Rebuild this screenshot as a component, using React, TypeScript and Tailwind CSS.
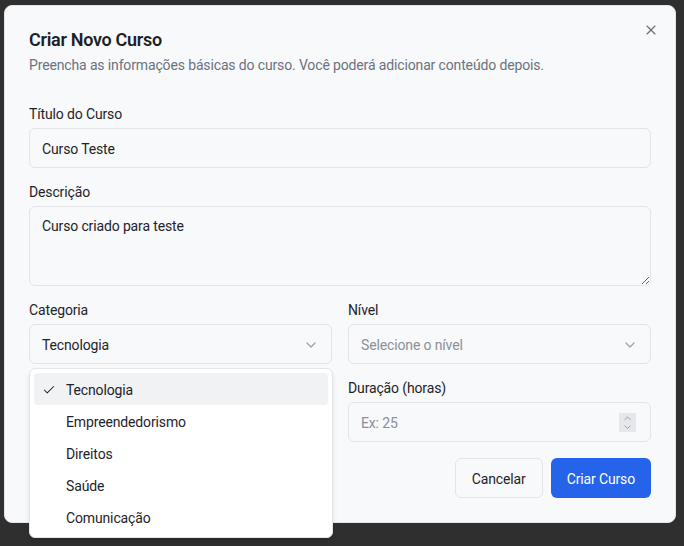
import { Check, ChevronDown, ChevronUp, X } from "lucide-react";

const categorias = ["Tecnologia", "Empreendedorismo", "Direitos", "Saúde", "Comunicação"];

const App = () => {
  const selected = "Tecnologia";

  return (
    <div className="h-[546px] w-full bg-[#2f2f2f] pl-[4px] pt-[5px] font-['Roboto',sans-serif] tracking-[-0.14px] text-[#1f2329]">
      {/* Dialog */}
      <div className="relative w-[672px] rounded-lg border border-[#e4e6ea] bg-[#f8f9fa] p-6">
        <button className="absolute right-4 top-4 text-[#6b7078]">
          <X className="h-4 w-4" strokeWidth={1.75} />
        </button>

        {/* Header */}
        <div className="flex flex-col gap-1.5 pt-px">
          <h2 className="text-lg font-semibold leading-none tracking-[-0.3px] text-[#1c1f26]">
            Criar Novo Curso
          </h2>
          <p className="text-sm leading-5 text-[#6b7280]">
            Preencha as informações básicas do curso. Você poderá adicionar conteúdo depois.
          </p>
        </div>

        {/* Form */}
        <form className="mt-4 flex flex-col gap-4 pt-[15px]">
          <div className="flex flex-col gap-[7px]">
            <label className="pt-px text-sm leading-none">Título do Curso</label>
            <div className="flex h-10 items-center rounded-md border border-[#e3e5e9] px-3 pt-px text-sm">
              Curso Teste
            </div>
          </div>

          <div className="flex flex-col gap-[7px]">
            <label className="pt-px text-sm leading-none">Descrição</label>
            <textarea
              defaultValue="Curso criado para teste"
              className="h-20 w-full rounded-md border border-[#e3e5e9] bg-transparent px-3 pb-[7px] pt-[9px] text-sm outline-none"
            />
          </div>

          <div className="grid grid-cols-2 gap-4">
            {/* Categoria with open menu */}
            <div className="relative flex flex-col gap-[7px]">
              <label className="pt-px text-sm leading-none">Categoria</label>
              <div className="flex h-10 items-center justify-between rounded-md border border-[#e3e5e9] px-3 pt-px text-sm">
                <span>Tecnologia</span>
                <ChevronDown className="h-4 w-4 opacity-40" />
              </div>

              <div className="absolute left-0 top-[66px] z-10 w-[304px] rounded-md border border-[#e3e5e9] bg-white p-1 shadow-md">
                {categorias.map((c) => (
                  <div
                    key={c}
                    className={`relative flex h-8 items-center rounded-sm pl-8 pt-px text-sm ${
                      c === selected ? "bg-[#f1f2f4]" : ""
                    }`}
                  >
                    {c === selected && (
                      <Check className="absolute left-2 h-3.5 w-3.5" strokeWidth={1.75} />
                    )}
                    {c}
                  </div>
                ))}
              </div>
            </div>

            <div className="flex flex-col gap-[7px]">
              <label className="pt-px text-sm leading-none">Nível</label>
              <div className="flex h-10 items-center justify-between rounded-md border border-[#e3e5e9] px-3 pt-px text-sm text-[#8b9099]">
                <span>Selecione o nível</span>
                <ChevronDown className="h-4 w-4 text-[#1f2329] opacity-40" />
              </div>
            </div>

            <div />

            <div className="flex flex-col gap-[7px]">
              <label className="pt-px text-sm leading-none">Duração (horas)</label>
              <div className="flex h-10 items-center justify-between rounded-md border border-[#e3e5e9] pl-3 pr-[14px] pt-px text-sm text-[#8b9099]">
                <span>Ex: 25</span>
                <div className="flex h-[19px] w-[17px] flex-col items-center justify-center bg-[#e6e7eb] text-[#8e929a]">
                  <ChevronUp className="-mb-[2px] h-[11px] w-[11px]" strokeWidth={2} />
                  <ChevronDown className="h-[11px] w-[11px]" strokeWidth={2} />
                </div>
              </div>
            </div>
          </div>

          <div className="flex justify-end gap-2">
            <button
              type="button"
              className="h-10 rounded-md border border-[#e3e5e9] px-4 pt-px text-sm"
            >
              Cancelar
            </button>
            <button
              type="button"
              className="h-10 rounded-md bg-[#2563eb] px-4 pt-px text-sm text-white"
            >
              Criar Curso
            </button>
          </div>
        </form>
      </div>
    </div>
  );
};

export default App;
